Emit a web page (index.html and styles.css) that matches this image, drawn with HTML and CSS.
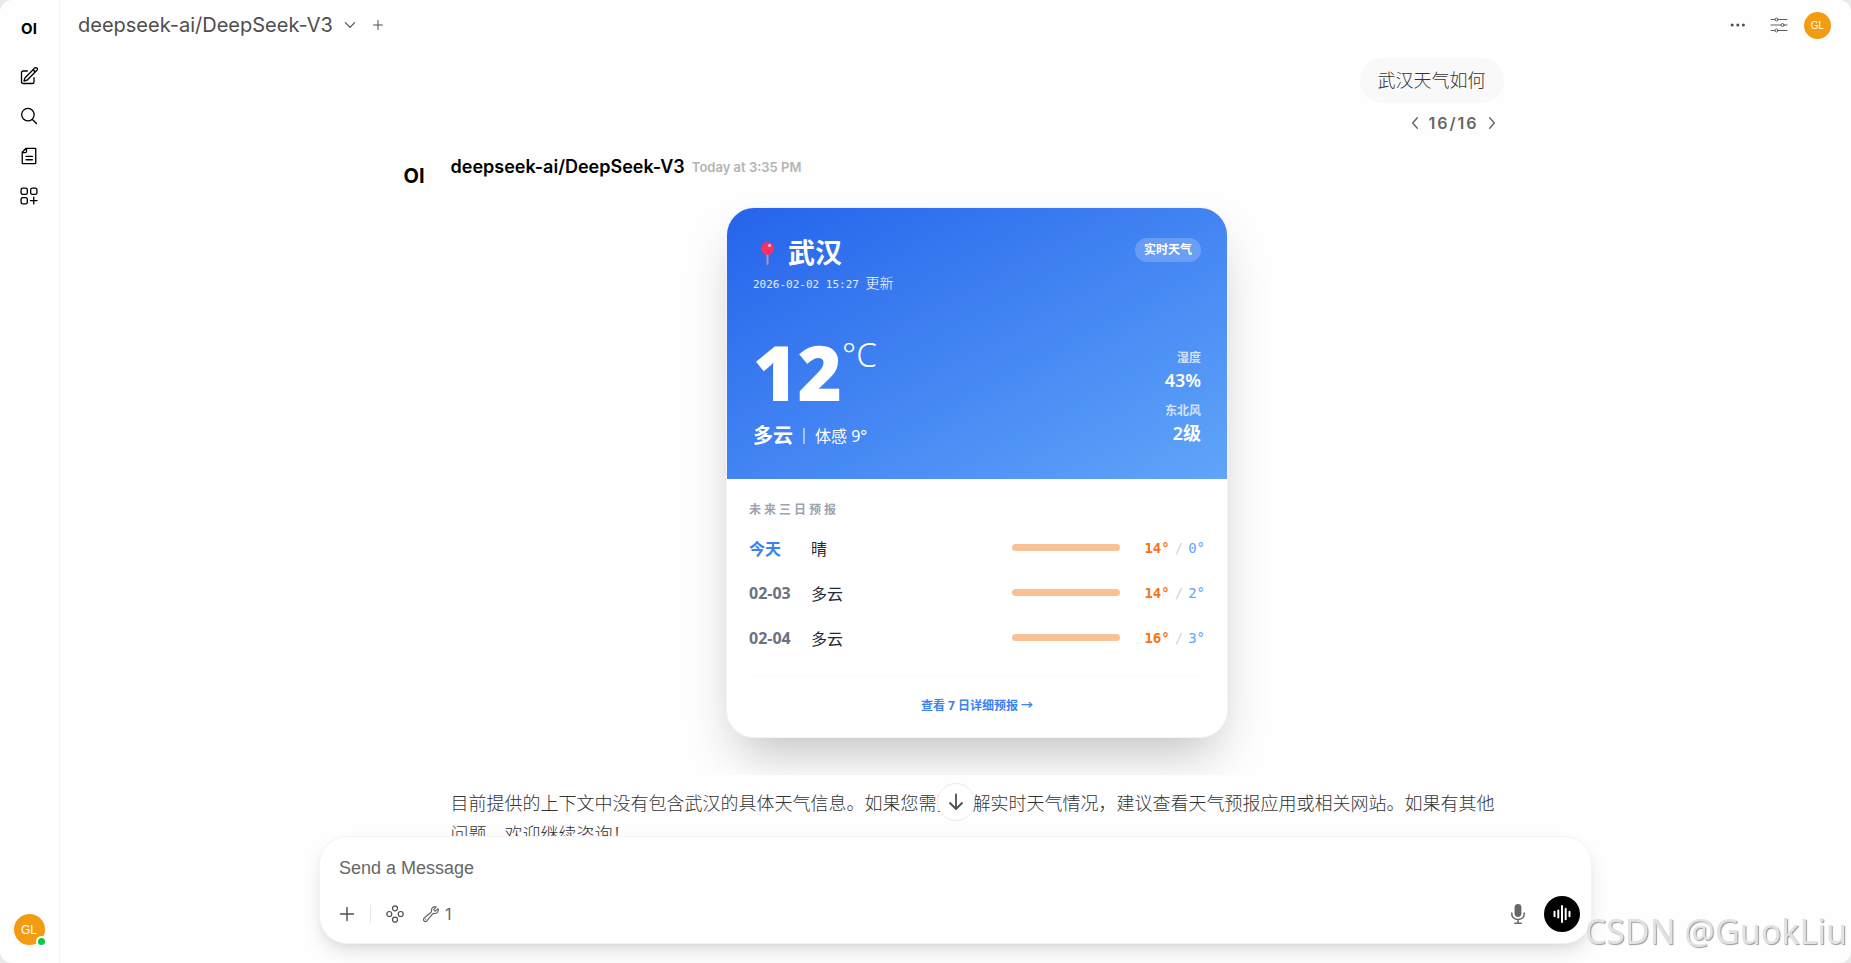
FILE: index.html
```html
<!DOCTYPE html>
<html lang="zh-CN">
<head>
    <meta charset="UTF-8">
    <meta name="viewport" content="width=device-width, initial-scale=1.0">
    <title>Open WebUI</title>
    <link rel="stylesheet" href="styles.css">
</head>
<body>
    <div class="app">
        <aside class="sidebar">
            <a class="logo" href="#">OI</a>
            <nav class="side-nav">
                <button type="button" class="icon-btn" aria-label="New Chat">
                    <svg width="20" height="20" viewBox="0 0 24 24" stroke-width="1.6"><path d="m16.9 4.5 1.7-1.7a1.9 1.9 0 1 1 2.6 2.6L10.6 16.1a4.5 4.5 0 0 1-1.9 1.1L6 18l.8-2.7a4.5 4.5 0 0 1 1.1-1.9l9-8.9Zm0 0L19.5 7.1M18 14v4.8A2.2 2.2 0 0 1 15.8 21H5.2A2.2 2.2 0 0 1 3 18.8V8.2A2.2 2.2 0 0 1 5.2 6H10"/></svg>
                </button>
                <button type="button" class="icon-btn" aria-label="Search">
                    <svg width="20" height="20" viewBox="0 0 24 24" stroke-width="1.6"><path d="m21 21-5.2-5.2m0 0A7.5 7.5 0 1 0 5.2 5.2a7.5 7.5 0 0 0 10.6 10.6Z"/></svg>
                </button>
                <button type="button" class="icon-btn" aria-label="Notes">
                    <svg width="20" height="20" viewBox="0 0 24 24" stroke-width="1.6"><path d="M8.5 2.8h10.700a.9.9 0 0 1 .9.9v16.600a.9.9 0 0 1-.9.9H4.800a.9.9 0 0 1-.9-.9V7.500L8.500 2.800ZM9 3v3.600A1.400 1.400 0 0 1 7.600 8H4M8.500 12.500h7.500M8.500 16.500h7.500"/></svg>
                </button>
                <button type="button" class="icon-btn" aria-label="Workspace">
                    <svg width="20" height="20" viewBox="0 0 24 24" stroke-width="1.6"><rect x="2.5" y="2.5" width="7.500" height="7.500" rx="2"/><rect x="14" y="2.5" width="7.500" height="7.500" rx="2"/><rect x="2.5" y="14" width="7.500" height="7.500" rx="2"/><path d="M17.700 13.500v8M13.700 17.500h8"/></svg>
                </button>
            </nav>
            <button type="button" class="avatar avatar-lg" aria-label="User menu">GL<span class="status"></span></button>
        </aside>

        <main class="main">
            <header class="topbar">
                <button type="button" class="model-select">deepseek-ai/DeepSeek-V3
                    <svg width="14" height="14" viewBox="0 0 24 24" stroke-width="2"><path d="m4 8 8 8 8-8"/></svg>
                </button>
                <button type="button" class="icon-btn-sm" aria-label="Add model">
                    <svg width="12" height="12" viewBox="0 0 24 24" stroke-width="2"><path d="M12 3v18M3 12h18"/></svg>
                </button>
                <div class="topbar-right">
                    <button type="button" class="icon-btn-sm" aria-label="More">
                        <svg width="18" height="18" viewBox="0 0 18 18"><g fill="currentColor" stroke="none"><circle cx="3.2" cy="9" r="1.5"/><circle cx="8.8" cy="9" r="1.5"/><circle cx="14.4" cy="9" r="1.5"/></g></svg>
                    </button>
                    <button type="button" class="icon-btn-sm" aria-label="Controls">
                        <svg width="18" height="18" viewBox="0 0 18 18" stroke-width=".9"><path d="M1 3.500h4M8 3.500h9M1 9h10M14 9h3M1 14.500h4M8 14.500h9"/><circle cx="6.500" cy="3.500" r="1.500"/><circle cx="12.500" cy="9" r="1.500"/><circle cx="6.500" cy="14.500" r="1.500"/></svg>
                    </button>
                    <button type="button" class="avatar" aria-label="User menu">GL</button>
                </div>
            </header>

            <section class="chat">
                <div class="thread">
                    <div class="user-message">
                        <p class="bubble">武汉天气如何</p>
                        <div class="pager">
                            <button type="button" aria-label="Previous"><svg width="14" height="14" viewBox="0 0 24 24" stroke-width="2.4"><path d="m16 3-8 9 8 9"/></svg></button>
                            <span>16/16</span>
                            <button type="button" aria-label="Next"><svg width="14" height="14" viewBox="0 0 24 24" stroke-width="2.4"><path d="m8 3 8 9-8 9"/></svg></button>
                        </div>
                    </div>

                    <article class="reply">
                        <div class="reply-logo">OI</div>
                        <div class="reply-body">
                            <div class="reply-head">
                                <span class="reply-name">deepseek-ai/DeepSeek-V3</span>
                                <time class="reply-time">Today at 3:35 PM</time>
                            </div>

                            <div class="embed">
                                <div class="weather">
                                    <div class="weather-top">
                                        <div class="weather-row">
                                            <div>
                                                <h2 class="city">
                                                    <svg class="pin" width="27" height="27" viewBox="0 0 27 27" aria-hidden="true">
                                                        <rect x="13.500" y="12" width="2" height="13" rx="1" fill="#a89bb0"/>
                                                        <circle cx="14.500" cy="8.500" r="6.500" fill="#f8315f"/>
                                                        <circle cx="16.500" cy="5.500" r="1.600" fill="#ffc4d3"/>
                                                    </svg>武汉</h2>
                                                <p class="updated"><span>2026-02-02 15:27</span> 更新</p>
                                            </div>
                                            <span class="badge">实时天气</span>
                                        </div>
                                        <div class="weather-row now">
                                            <div>
                                                <div class="temp">12<span class="unit">°C</span></div>
                                                <div class="condition"><strong>多云</strong><i></i><span>体感 9°</span></div>
                                            </div>
                                            <dl class="stats">
                                                <dt>湿度</dt>
                                                <dd>43%</dd>
                                                <dt>东北风</dt>
                                                <dd>2级</dd>
                                            </dl>
                                        </div>
                                    </div>
                                    <div class="forecast">
                                        <h3>未来三日预报</h3>
                                        <ul>
                                            <li><span class="day today">今天</span><span class="sky">晴</span><span class="bar"></span><span class="range"><b>14°</b><i>/</i>0°</span></li>
                                            <li><span class="day">02-03</span><span class="sky">多云</span><span class="bar"></span><span class="range"><b>14°</b><i>/</i>2°</span></li>
                                            <li><span class="day">02-04</span><span class="sky">多云</span><span class="bar"></span><span class="range"><b>16°</b><i>/</i>3°</span></li>
                                        </ul>
                                        <div class="forecast-foot"><a href="#">查看 7 日详细预报 →</a></div>
                                    </div>
                                </div>
                            </div>

                            <p class="reply-text">目前提供的上下文中没有包含武汉的具体天气信息。如果您需要了解实时天气情况，建议查看天气预报应用或相关网站。如果有其他问题，欢迎继续咨询！</p>
                        </div>
                    </article>
                </div>
            </section>

            <form class="composer">
                <button type="button" class="scroll-down" aria-label="Scroll to bottom">
                    <svg width="20" height="20" viewBox="0 0 20 20" stroke-width="1.8"><path d="M10 2.500v14M4 11l6 6 6-6"/></svg>
                </button>
                <input type="text" class="prompt" placeholder="Send a Message" aria-label="Send a Message">
                <div class="tools">
                    <button type="button" class="tool" aria-label="More options">
                        <svg width="20" height="20" viewBox="0 0 20 20" stroke-width="1.400"><path d="M10 3.500v13M3.500 10h13"/></svg>
                    </button>
                    <span class="tools-divider"></span>
                    <button type="button" class="tool" aria-label="Integrations">
                        <svg width="20" height="20" viewBox="0 0 20 20" stroke-width="1.200"><circle cx="10" cy="4.300" r="2.500"/><circle cx="4.300" cy="10" r="2.500"/><circle cx="15.700" cy="10" r="2.500"/><circle cx="10" cy="15.700" r="2.500"/></svg>
                    </button>
                    <button type="button" class="tool tool-count" aria-label="Available tools">
                        <svg width="18" height="18" viewBox="0 0 24 24" stroke-width="1.600"><path d="M21.800 6.800a4.500 4.500 0 0 1-4.900 4.500c-1.100-.1-2.300.1-3 1l-7.200 8.600a2.600 2.600 0 1 1-3.600-3.600l8.600-7.200c.9-.7 1.100-1.900 1-3a4.500 4.500 0 0 1 6.300-4.500L15.700 5.900a3 3 0 0 0 2.300 2.300l3.300-3.300c.3.600.5 1.200.5 1.900ZM4.900 19.100h.01"/></svg>1
                    </button>
                    <div class="tools-right">
                        <button type="button" class="tool" aria-label="Dictate">
                            <svg width="20" height="20" viewBox="0 0 20 20" stroke-width="1.500"><rect x="6.600" y="0" width="6.800" height="13" rx="3.400" fill="currentColor" stroke="none"/><path d="M3.800 9v1.200a6.200 5.400 0 0 0 12.400 0V9M10 15.600V19M6.800 19.200h6.400"/></svg>
                        </button>
                        <button type="button" class="voice" aria-label="Voice mode">
                            <svg width="20" height="20" viewBox="0 0 20 20" stroke-width="2"><path d="M2.500 7.800v4.400M6.300 6.500v7M10 2v16M13.700 4.800v10.400M17.500 7.800v4.400"/></svg>
                        </button>
                    </div>
                </div>
            </form>
        </main>
    </div>
    <div class="watermark">CSDN @GuokLiu</div>
</body>
</html>
```
FILE: styles.css
```css
* {
    box-sizing: border-box;
    margin: 0;
    padding: 0;
}

body {
    height: 100vh;
    overflow: hidden;
    background: #e9e9e9;
    color: #4e4e4e;
    font-family: Inter, "Noto Sans CJK SC", sans-serif;
}

button {
    display: flex;
    align-items: center;
    justify-content: center;
    border: none;
    background: none;
    color: inherit;
    font: inherit;
    cursor: pointer;
}

a {
    color: inherit;
    text-decoration: none;
}

svg {
    display: block;
    flex-shrink: 0;
    fill: none;
    stroke: currentColor;
    stroke-linecap: round;
    stroke-linejoin: round;
}

.app {
    display: flex;
    height: 100%;
    border-radius: 12px;
    background: #fefefe;
    overflow: hidden;
}

/* sidebar */
.sidebar {
    display: flex;
    flex-direction: column;
    align-items: center;
    width: 60px;
    padding: 19px 1px 18px 0;
    border-right: 1px solid #f4f4f4;
    color: #000;
}

.logo {
    font-size: 15px;
    font-weight: 700;
    line-height: 20px;
}

.side-nav {
    flex: 1;
    padding-top: 17px;
}

.icon-btn {
    width: 40px;
    height: 40px;
}

.avatar {
    position: relative;
    width: 27px;
    height: 27px;
    border-radius: 50%;
    background: #f39c12;
    color: #fff;
    font-family: "Liberation Sans", sans-serif;
    font-size: 10px;
}

.avatar-lg {
    width: 31px;
    height: 31px;
    font-size: 12px;
}

.status {
    position: absolute;
    right: -2px;
    bottom: -2px;
    width: 11px;
    height: 11px;
    border: 2px solid #fff;
    border-radius: 50%;
    background: #00c950;
}

/* top bar */
.main {
    display: flex;
    flex: 1;
    flex-direction: column;
    min-width: 0;
    padding-bottom: 19px;
}

.topbar {
    display: flex;
    align-items: center;
    height: 50px;
    padding: 0 20px 0 18px;
}

.model-select {
    gap: 10px;
    padding-right: 12px;
    font-size: 20px;
}

.icon-btn-sm {
    min-width: 18px;
    height: 28px;
}

.topbar-right {
    display: flex;
    gap: 10px;
    align-items: center;
    margin-left: auto;
}

.topbar-right .icon-btn-sm {
    width: 31px;
}

/* messages */
.chat {
    flex: 1;
    min-height: 0;
    overflow: hidden;
}

.thread {
    max-width: 1104px;
    margin: 0 auto;
    padding: 8px 4px 0 0;
}

.user-message {
    display: flex;
    flex-direction: column;
    align-items: flex-end;
}

.bubble {
    padding: 10px 18px;
    border-radius: 24px;
    background: #f9f9f9;
    color: #333;
    font-size: 18px;
    font-weight: 300;
    line-height: 25px;
}

.pager {
    display: flex;
    gap: 6px;
    align-items: center;
    padding: 8px 5px 0 0;
    color: #666;
    font-size: 16px;
    font-weight: 600;
    letter-spacing: 2px;
    line-height: 24px;
}

.reply {
    display: flex;
    padding-top: 20px;
}

.reply-logo {
    width: 47px;
    padding-top: 9px;
    color: #000;
    font-size: 20px;
    font-weight: 700;
    line-height: 24px;
}

.reply-body {
    flex: 1;
    min-width: 0;
}

.reply-head {
    display: flex;
    gap: 7px;
    align-items: center;
    line-height: 24px;
}

.reply-name {
    color: #000;
    font-size: 18px;
    font-weight: 600;
}

.reply-time {
    color: #b4b4b4;
    font-size: 13px;
    font-weight: 600;
}

.reply-text {
    padding-top: 13px;
    color: #333;
    font-size: 18px;
    font-weight: 300;
    line-height: 31px;
}

/* weather card */
.embed {
    display: flex;
    justify-content: center;
    padding: 28px 0 37px;
    overflow: hidden;
    font-family: "Noto Sans", "Noto Sans CJK SC", sans-serif;
}

.weather {
    width: 502px;
    border: 1px solid #f3f4f6;
    border-radius: 28px;
    background: #fff;
    box-shadow: 0 25px 50px -12px rgba(0, 0, 0, 0.25);
    overflow: hidden;
}

.weather-top {
    padding: 26px 26px 28px;
    background: linear-gradient(to bottom right, #2563eb, #60a5fa);
    color: #fff;
}

.weather-row {
    display: flex;
    align-items: flex-start;
    justify-content: space-between;
}

.city {
    display: flex;
    gap: 8px;
    align-items: center;
    font-size: 27px;
    line-height: 38px;
}

.pin {
    stroke: none;
}

.updated {
    font-size: 14px;
    font-weight: 300;
    line-height: 22px;
}

.updated span {
    margin-right: 3px;
    color: #e3edfe;
    font-family: "DejaVu Sans Mono", monospace;
    font-size: 11px;
}

.badge {
    margin-top: 4px;
    padding: 0 9px;
    border-radius: 12px;
    background: rgba(255, 255, 255, 0.2);
    font-size: 12px;
    font-weight: 700;
    line-height: 24px;
}

.now {
    align-items: flex-end;
    padding-top: 36px;
}

.temp {
    display: flex;
    font-size: 76px;
    font-weight: 900;
    line-height: 80px;
}

.unit {
    font-size: 33px;
    font-weight: 300;
    line-height: 46px;
}

.condition {
    display: flex;
    gap: 10px;
    align-items: center;
    padding-top: 9px;
    font-size: 16px;
    line-height: 30px;
}

.condition strong {
    font-size: 20px;
}

.condition i {
    width: 2px;
    height: 16px;
    background: #a3c4fb;
}

.stats {
    padding-bottom: 6px;
    text-align: right;
}

.stats dt {
    padding-top: 9px;
    color: #d3e2fd;
    font-size: 12px;
    font-weight: 700;
    line-height: 20px;
}

.stats dd {
    font-size: 18px;
    font-weight: 600;
    line-height: 24px;
}

.forecast {
    padding: 20px 22px;
}

.forecast h3 {
    color: #9ca3af;
    font-size: 12px;
    letter-spacing: 3px;
    line-height: 22px;
}

.forecast ul {
    padding: 4px 0 16px;
    list-style: none;
}

.forecast li {
    display: flex;
    align-items: center;
    height: 45px;
    font-size: 16px;
}

.day {
    width: 62px;
    color: #6b7280;
    font-weight: 700;
}

.today {
    color: #3b82f6;
}

.sky {
    flex: 1;
    color: #1f2937;
}

.bar {
    width: 108px;
    height: 7px;
    border-radius: 4px;
    background: #f8c196;
}

.range {
    width: 85px;
    color: #60a5fa;
    font-family: "DejaVu Sans Mono", monospace;
    font-size: 14px;
    text-align: right;
}

.range b {
    color: #f97316;
}

.range i {
    margin: 0 5px;
    color: #d1d5db;
    font-style: normal;
}

.forecast-foot {
    padding-top: 18px;
    border-top: 1px solid #f9fafb;
    color: #3b82f6;
    font-size: 12px;
    font-weight: 700;
    line-height: 22px;
    text-align: center;
}

/* composer */
.composer {
    position: relative;
    width: calc(100% - 40px);
    max-width: 1273px;
    margin: 0 auto;
    padding: 16px 11px 11px;
    border: 1px solid #f3f3f3;
    border-radius: 28px;
    background: #fff;
    box-shadow: 0 10px 20px -3px rgba(0, 0, 0, 0.12), 0 4px 8px -4px rgba(0, 0, 0, 0.08);
}

.scroll-down {
    position: absolute;
    bottom: 100%;
    left: 50%;
    width: 38px;
    height: 38px;
    margin: 0 0 16px -19px;
    border: 1px solid #ececec;
    border-radius: 50%;
    background: #fff;
}

.prompt {
    display: block;
    width: 100%;
    height: 30px;
    padding: 0 8px;
    border: none;
    outline: none;
    background: none;
    font-family: "Liberation Sans", sans-serif;
    font-size: 18px;
}

.prompt::placeholder {
    color: #676767;
}

.tools {
    display: flex;
    align-items: center;
    padding-top: 13px;
}

.tool {
    min-width: 32px;
    height: 32px;
}

.tool-count {
    gap: 5px;
    margin-left: 5px;
    padding: 0 6px;
    color: #676767;
    font-size: 16px;
}

.tools-divider {
    width: 1px;
    height: 18px;
    margin: 0 8px 0 7px;
    background: #e8e8e8;
}

.tools-right {
    display: flex;
    gap: 10px;
    align-items: center;
    margin-left: auto;
    color: #676767;
}

.voice {
    width: 36px;
    height: 36px;
    border-radius: 50%;
    background: #000;
    color: #fff;
}

.watermark {
    position: fixed;
    right: 4px;
    bottom: 8px;
    color: #e2e2e2;
    font-family: "Noto Sans", sans-serif;
    font-size: 34px;
    line-height: 48px;
    text-shadow: 1px 1px 1px #999;
}
```
